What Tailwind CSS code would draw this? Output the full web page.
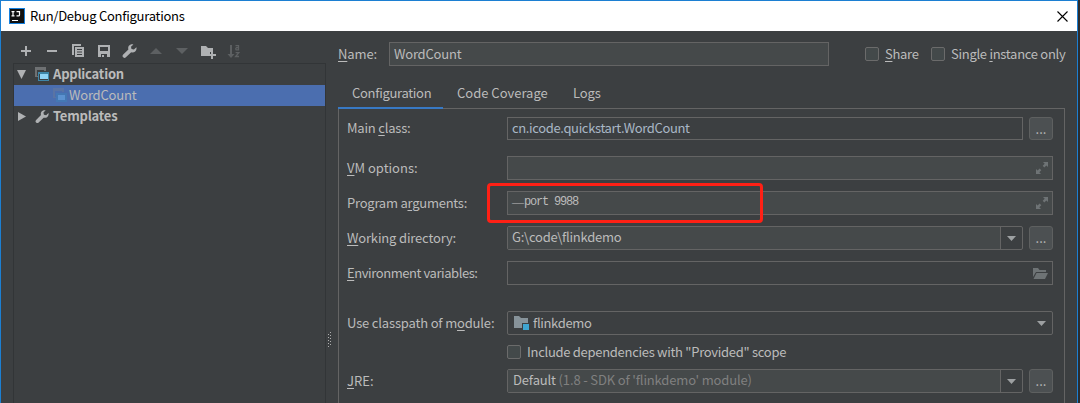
<!DOCTYPE html>
<html lang="en">
<head>
<meta charset="utf-8">
<title>Run/Debug Configurations</title>
<script src="https://cdn.jsdelivr.net/npm/@tailwindcss/browser@4"></script>
</head>
<body class="w-[1080px] h-[403px] overflow-hidden bg-[#2b2d30] font-['Noto_Sans_CJK_SC','Noto_Sans',sans-serif] text-[13px] leading-5 text-[#bbbbbb] whitespace-nowrap">
<svg class="hidden">
  <defs>
    <symbol id="wrench" viewBox="0 0 16 16"><path d="M14.4 4.2 11.9 6.600 9.500 6 9 3.800 11.400 1.400C9.700.9 7.900 1.400 6.900 2.800c-.8 1.100-.9 2.400-.5 3.600L1.200 11.600a1.800 1.800 0 0 0 2.700 2.700L9.200 9.200c1.300.5 2.900.2 4-.8 1.200-1.100 1.600-2.700 1.200-4.200z"/></symbol>
    <symbol id="expand" viewBox="0 0 12 12"><path d="M7 0h5v5l-1.600-1.600L8.300 5.400 6.700 3.800 8.700 1.700zM5 12H0V7l1.600 1.600 2.100-2 1.600 1.600-2 2.100z"/></symbol>
    <symbol id="down" viewBox="0 0 9 5"><path d="M0 0h9L4.500 5z"/></symbol>
  </defs>
</svg>
<div class="flex h-[403px]">
<div class="w-[1078px] h-[403px] flex flex-col border-t border-x border-[#1c7fd2] bg-[#3c3f41]">
  <header class="h-[30px] shrink-0 bg-white flex items-center pl-2 pr-[9px] text-black">
    <svg class="size-4" viewBox="0 0 16 16"><path fill="#1680dd" d="M0 0h16v16H0z"/><path fill="#111" d="M1 1h14v14H1z"/><path fill="none" stroke="#fff" stroke-width="1.200" d="M2.500 3.600h3M4 3.600v4.200M2.500 7.800h3M7.500 3.600h3v3.300q0 .9-1 .9H7.500"/><path fill="#fff" d="M3 12h6v1H3z"/></svg>
    <h1 class="ml-[5px] text-[13px] tracking-[-0.26px] grow">Run/Debug Configurations</h1>
    <svg class="size-[11px]" viewBox="0 0 11 11"><path d="m.5.5 10 10m0-10-10 10" stroke="#000" stroke-width="1.100"/></svg>
  </header>
  <main class="flex grow min-h-0">
    <aside class="w-[325px] shrink-0 pl-3 pt-3 flex flex-col">
      <div class="h-5 pb-1 flex items-center pl-[5px] gap-[10px] fill-[#afb1b3]">
        <svg class="size-4" viewBox="0 0 16 16"><path d="M7 3h2v4h4v2H9v4H7V9H3V7h4z"/></svg>
        <svg class="size-4" viewBox="0 0 16 16"><path d="M3 7h10v2H3z"/></svg>
        <svg class="size-4" viewBox="0 0 16 16"><path d="M2 1h9v2H4v9H2z"/><path fill-rule="evenodd" d="M5 4h9v10H5zm2 2v1h5V6zm0 2.500v1h5v-1zM7 11v1h5v-1z"/></svg>
        <svg class="size-4" viewBox="0 0 16 16"><path fill-rule="evenodd" d="M2 2h12v12H2zm2 2v4h8V4zm1 7v3h1v-2h2v2h3v-3z"/></svg>
        <svg class="size-4"><use href="#wrench"/></svg>
        <svg class="size-4 fill-[#5d6062]" viewBox="0 0 16 16"><path d="M2 11h12L8 5z"/></svg>
        <svg class="size-4 fill-[#5d6062]" viewBox="0 0 16 16"><path d="M2 5h12l-6 6z"/></svg>
        <svg class="size-4" viewBox="0 0 16 16"><path d="M1 3h5l2 2h5v4h-3v4H1z"/><path d="M11 8h2v3h3v2h-3v3h-2v-3H8.500v-2H11z"/></svg>
        <svg class="size-4 fill-[#5d6062]" viewBox="0 0 16 16"><path d="M4 2h2v9h2.500L5 15l-3.500-4H4z"/><path fill="none" stroke="#5d6062" stroke-width="1.300" d="M9.500 2.600h3v4.200h-2.400q-.9-1.200.2-2.100h2.200M9.600 9.700h3.200l-3.200 3.800H13"/></svg>
      </div>
      <div class="grow border-t border-x border-[#323537] font-bold tracking-[-0.2px]">
        <div class="h-[21px] pb-px flex items-center pl-[3px]">
          <svg class="w-[9px] h-[9px] fill-[#afb1b3]" viewBox="0 0 9 9"><path d="M0 0h9L4.500 9z"/></svg>
          <svg class="ml-[9px] w-[14px] h-[14px]" viewBox="0 0 14 14"><path fill="#6e7173" d="M0 0h11v4H9V3H2v6h1v1H0z"/><path fill="#3e86a8" d="M3 5h11v9H3z"/><path fill="#3c3f41" d="M4 7h9v6H4z"/><path fill="#8fd3f5" d="M5 7h8v5H5z"/></svg>
          <span class="ml-1">Application</span>
        </div>
        <div class="h-[21px] pb-px flex items-center pl-[39px] bg-[#4b6eaf] font-normal">
          <svg class="w-[14px] h-[14px]" viewBox="0 0 14 14"><path fill="#5a74a4" d="M0 0h11v4H9V3H2v6h1v1H0z"/><path fill="#4478b4" d="M3 5h11v9H3z"/><path fill="#5c92d0" d="M5 7h7v5H5z"/></svg>
          <span class="ml-[2px]">WordCount</span>
        </div>
        <div class="h-[21px] pb-px flex items-center pl-[4px] fill-[#afb1b3]">
          <svg class="w-[8px] h-[9px]" viewBox="0 0 8 9"><path d="M0 0v9l8-4.500z"/></svg>
          <svg class="ml-[9px] size-[15px]"><use href="#wrench"/></svg>
          <span class="ml-[3px]">Templates</span>
        </div>
      </div>
    </aside>
    <div class="w-3 shrink-0 pl-[2px] pt-[301px]">
      <svg class="w-1 h-[15px]" viewBox="0 0 4 15"><path fill="#b0b0b0" d="M2 0h1v1H2zM0 2h1v1H0zM2 3h1v1H2zM0 5h1v1H0zM2 6h1v1H2zM0 8h1v1H0zM2 9h1v1H2zM0 11h1v1H0zM2 12h1v1H2zM0 14h1v1H0z"/></svg>
    </div>
    <section class="w-[727px] shrink-0 flex flex-col">
      <div class="mt-[11px] h-6 flex items-center *:shrink-0">
        <label class="w-[51px] tracking-[-0.1px]"><u class="underline-offset-2">N</u>ame:</label>
        <div class="w-[440px] h-6 border border-[#646464] bg-[#45494a] pl-1 pt-px tracking-[-0.2px]">WordCount</div>
        <span class="ml-[36px] size-[14px] border border-[#6b6b6b] rounded-[2px] bg-[#43494a]"></span>
        <span class="ml-[6px] w-[46px] tracking-[-0.3px]"><u class="underline-offset-2">S</u>hare</span>
        <span class="size-[14px] border border-[#6b6b6b] rounded-[2px] bg-[#43494a]"></span>
        <span class="ml-[6px] tracking-[-0.29px]">Single <u class="underline-offset-2">i</u>nstance only</span>
      </div>
      <nav class="mt-3 h-[31px] shrink-0 flex -mb-px relative">
        <span class="w-[105px] h-[31px] pl-[14px] pt-[5px] border-b-2 border-[#3879c4] tracking-[-0.3px]">Configuration</span>
        <span class="ml-[14px] w-[116px] pt-[5px]">Code Coverage</span>
        <span class="pt-[5px] tracking-[-0.1px]">Logs</span>
      </nav>
      <div class="grow border-t border-x border-[#646464] pl-2 pt-2 flex flex-col *:shrink-0">
        <div class="h-6 flex"><label class="w-[160px] pt-px tracking-[-0.2px]">Main <u class="underline-offset-2">c</u>lass:</label><div class="w-[516px] h-[23px] border border-[#646464] pl-1 text-[#a9b7c6] tracking-[-0.36px]">cn.icode.quickstart.WordCount</div><button class="ml-[6px] w-6 h-[23px] rounded-[3px] border border-[#5e6060] bg-[#4c5052]">...</button></div>
        <div class="mt-[15px] h-6 flex"><label class="w-[160px] pt-[2px]"><u class="underline-offset-2">V</u>M options:</label><div class="w-[546px] h-6 border border-[#646464] bg-[#45494a] flex items-center justify-end pr-1"><svg class="size-3 fill-[#6e7375]"><use href="#expand"/></svg></div></div>
        <div class="mt-[11px] h-6 flex relative"><label class="w-[160px] pt-[2px] tracking-[-0.24px]">Program a<u class="underline-offset-2">r</u>guments:</label><div class="w-[546px] h-6 border border-[#646464] bg-[#45494a] flex items-center justify-between pl-1 pr-1"><span class="flex items-center pb-[2px] text-[12px]"><span class="font-['Liberation_Serif']">—</span><span class="font-['Liberation_Mono'] tracking-[-1.200px]">port 9988</span></span><svg class="size-3 fill-[#6e7375]"><use href="#expand"/></svg></div>
          <div class="absolute left-[140px] top-[-8px] w-[276px] h-10 border-3 border-[#ff2015] rounded-[4px]"></div></div>
        <div class="mt-[11px] h-6 flex"><label class="w-[160px] pt-[2px] tracking-[-0.16px]"><u class="underline-offset-2">W</u>orking directory:</label><div class="w-[516px] h-6 border border-[#646464] rounded-[2px] flex"><span class="grow bg-[#45494a] border-r border-[#646464] pl-1 tracking-[-0.24px]">G:\code\flinkdemo</span><span class="w-[21px] flex items-center justify-center"><svg class="w-[9px] h-[5px] fill-[#9da0a2]"><use href="#down"/></svg></span></div><button class="ml-[6px] w-6 h-6 rounded-[3px] border border-[#5e6060] bg-[#4c5052]">...</button></div>
        <div class="mt-[11px] h-6 flex"><label class="w-[160px] pt-[2px] tracking-[-0.43px]"><u class="underline-offset-2">E</u>nvironment variables:</label><div class="w-[546px] h-6 border border-[#646464] flex items-center justify-end pr-1"><svg class="w-[15px] h-[11px] fill-[#6e7375]" viewBox="0 0 15 11"><path d="M0 0h5l1.500 2H13v2H3L0 9z"/><path d="M3.500 5H15l-3 6H.5z"/></svg></div></div>
        <div class="mt-[26px] h-6 flex"><label class="w-[160px] pt-[2px] tracking-[-0.17px]">Use classpath of m<u class="underline-offset-2">o</u>dule:</label><div class="w-[546px] h-6 border border-[#646464] rounded-[2px] flex items-center pl-[6px] pr-[6px]"><svg class="w-[15px] h-[14px]" viewBox="0 0 15 14"><path fill="#87939a" d="M0 0h5l2 2h7v5H8v5H0z"/><path fill="#40a5d0" d="M9 8h6v6H9z"/></svg><span class="ml-1 grow tracking-[-0.33px]">flinkdemo</span><svg class="w-[9px] h-[5px] fill-[#9da0a2]"><use href="#down"/></svg></div></div>
        <div class="mt-[10px] h-[14px] pl-[160px] flex items-center"><span class="size-[14px] border border-[#6b6b6b] rounded-[2px] bg-[#43494a]"></span><span class="ml-[6px] tracking-[-0.29px]">Include dependencies with "Provided" scope</span></div>
        <div class="mt-[10px] h-6 flex"><label class="w-[160px] pt-[2px]"><u class="underline-offset-2">J</u>RE:</label><div class="w-[516px] h-6 border border-[#646464] rounded-[2px] flex"><span class="grow bg-[#45494a] border-r border-[#646464] pl-[5px] tracking-[-0.15px]">Default <span class="text-[#808080]">(1.8 - SDK of 'flinkdemo' module)</span></span><span class="w-[21px] flex items-center justify-center"><svg class="w-[9px] h-[5px] fill-[#9da0a2]"><use href="#down"/></svg></span></div><button class="ml-[6px] w-6 h-6 rounded-[3px] border border-[#5e6060] bg-[#4c5052]">...</button></div>
      </div>
    </section>
  </main>
</div>
</div>
</body>
</html>
